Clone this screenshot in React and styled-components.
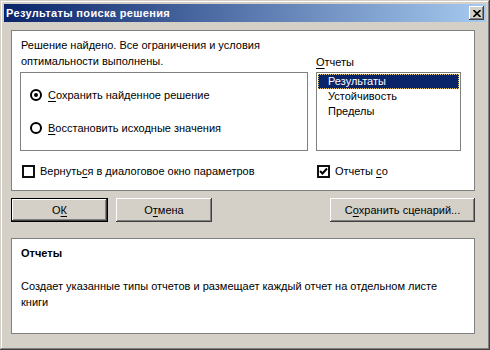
import styled, { createGlobalStyle } from 'styled-components'

const GlobalStyle = createGlobalStyle`
  html, body {
    margin: 0;
    padding: 0;
    background: #d4d0c8;
  }
  * {
    box-sizing: border-box;
  }
`

const Window = styled.div`
  width: 490px;
  height: 350px;
  padding: 4px;
  background: #d4d0c8;
  display: flex;
  flex-direction: column;
  font-family: 'Liberation Sans', Arial, sans-serif;
  font-size: 11px;
  color: #000;
  box-shadow: inset -1px -1px #404040, inset 1px 1px #d4d0c8,
    inset -2px -2px #808080, inset 2px 2px #fff;
`

const TitleBar = styled.div`
  height: 18px;
  display: flex;
  align-items: center;
  justify-content: space-between;
  padding: 0 2px 0 2px;
  background: linear-gradient(to right, #0a246a, #a6caf0);
`

const Title = styled.span`
  color: #fff;
  font-weight: bold;
  font-size: 11px;
  letter-spacing: 0.35px;
`

const CloseButton = styled.div`
  width: 15px;
  height: 14px;
  background: #d4d0c8;
  display: flex;
  align-items: center;
  justify-content: center;
  box-shadow: inset -1px -1px #404040, inset 1px 1px #fff,
    inset -2px -2px #808080;
`

const Content = styled.div`
  display: flex;
  flex-direction: column;
  padding: 8px 11px 0 7px;
`

const Panel = styled.div`
  background: #fff;
  border: 1px solid #808080;
  height: ${(p) => p.$height}px;
`

const MainPanel = styled(Panel)`
  display: grid;
  grid-template-columns: 288px 145px;
  grid-template-rows: 32px 79px auto;
  column-gap: 8px;
  row-gap: 3px;
  padding: 6px 0 0 8px;
`

const Message = styled.div`
  line-height: 16px;
  padding-left: 1px;
  align-self: end;
`

const Label = styled.div`
  line-height: 13px;
  align-self: end;
`

const Group = styled.div`
  border: 1px solid #808080;
  padding: 14px 0 0 9px;
  display: flex;
  flex-direction: column;
  gap: 17px;
`

const Option = styled.label`
  display: flex;
  align-items: center;
  gap: 6px;
  height: 16px;
  line-height: 16px;
`

const CheckRow = styled(Option)`
  margin-top: 9px;
  padding-left: ${(p) => p.$indent}px;
  gap: 5px;
`

const Box = styled.span`
  width: 13px;
  height: 13px;
  border: 2px solid #111;
  background: #fff;
  display: flex;
  align-items: center;
  justify-content: center;
`

const List = styled.div`
  border: 1px solid #808080;
  padding-top: 1px;
  display: flex;
  flex-direction: column;
`

const Item = styled.div`
  height: 15px;
  line-height: 15px;
  padding-left: 10px;
  margin: 0 1px;
  background: ${(p) => (p.$selected ? '#0a246a' : 'transparent')};
  color: ${(p) => (p.$selected ? '#fff' : '#000')};
  outline: ${(p) => (p.$selected ? '1px dotted #e8c860' : 'none')};
  outline-offset: -1px;
`

const ButtonRow = styled.div`
  display: flex;
  gap: 8px;
  margin-top: 7px;
`

const Button = styled.div`
  width: ${(p) => p.$width}px;
  height: 24px;
  display: flex;
  align-items: center;
  justify-content: center;
  background: #d4d0c8;
  border: ${(p) => (p.$default ? '1px solid #000' : '0')};
  box-shadow: inset -1px -1px #404040, inset 1px 1px #fff,
    inset -2px -2px #808080;
`

const Spacer = styled.div`
  flex: 1;
`

const HelpPanel = styled(Panel)`
  margin-top: 16px;
  padding: 6px 20px 0 9px;
  line-height: 16px;
`

const HelpTitle = styled.div`
  font-weight: bold;
  margin-bottom: 17px;
`

const U = styled.u`
  text-underline-offset: 2px;
`

function Radio({ checked }) {
  return (
    <svg width='12' height='12' viewBox='0 0 12 12'>
      <circle cx='6' cy='6' r='5' fill='#fff' stroke='#000' strokeWidth='2' />
      {checked && <circle cx='6' cy='6' r='2' fill='#000' />}
    </svg>
  )
}

function Check({ checked }) {
  return (
    <Box>
      {checked && (
        <svg width='9' height='9' viewBox='0 0 9 9'>
          <path d='M1 4 L3.5 6.5 L8 1.5' fill='none' stroke='#000' strokeWidth='2' />
        </svg>
      )}
    </Box>
  )
}

export default function App() {
  return (
    <>
      <GlobalStyle />
      <Window>
        <TitleBar>
          <Title>Результаты поиска решения</Title>
          <CloseButton>
            <svg width='8' height='7' viewBox='0 0 8 7'>
              <path d='M0.5 0 L7.5 7 M7.5 0 L0.5 7' stroke='#000' strokeWidth='1.6' />
            </svg>
          </CloseButton>
        </TitleBar>
        <Content>
          <MainPanel $height={161}>
            <Message>
              Решение найдено. Все ограничения и условия оптимальности выполнены.
            </Message>
            <Label>
              <U>О</U>тчеты
            </Label>
            <Group>
              <Option>
                <Radio checked />
                <span>
                  <U>С</U>охранить найденное решение
                </span>
              </Option>
              <Option>
                <Radio />
                <span>
                  <U>В</U>осстановить исходные значения
                </span>
              </Option>
            </Group>
            <List>
              <Item $selected>Результаты</Item>
              <Item>Устойчивость</Item>
              <Item>Пределы</Item>
            </List>
            <CheckRow $indent={2}>
              <Check />
              <span>
                Вернуть<U>с</U>я в диалоговое окно параметров
              </span>
            </CheckRow>
            <CheckRow $indent={1}>
              <Check checked />
              <span>
                Отчеты <U>с</U>о
              </span>
            </CheckRow>
          </MainPanel>
          <ButtonRow>
            <Button $width={97} $default>
              О<U>К</U>
            </Button>
            <Button $width={96}>
              О<U>т</U>мена
            </Button>
            <Spacer />
            <Button $width={145}>
              С<U>о</U>хранить сценарий...
            </Button>
          </ButtonRow>
          <HelpPanel $height={96}>
            <HelpTitle>Отчеты</HelpTitle>
            <div>
              Создает указанные типы отчетов и размещает каждый отчет на отдельном
              листе книги
            </div>
          </HelpPanel>
        </Content>
      </Window>
    </>
  )
}
